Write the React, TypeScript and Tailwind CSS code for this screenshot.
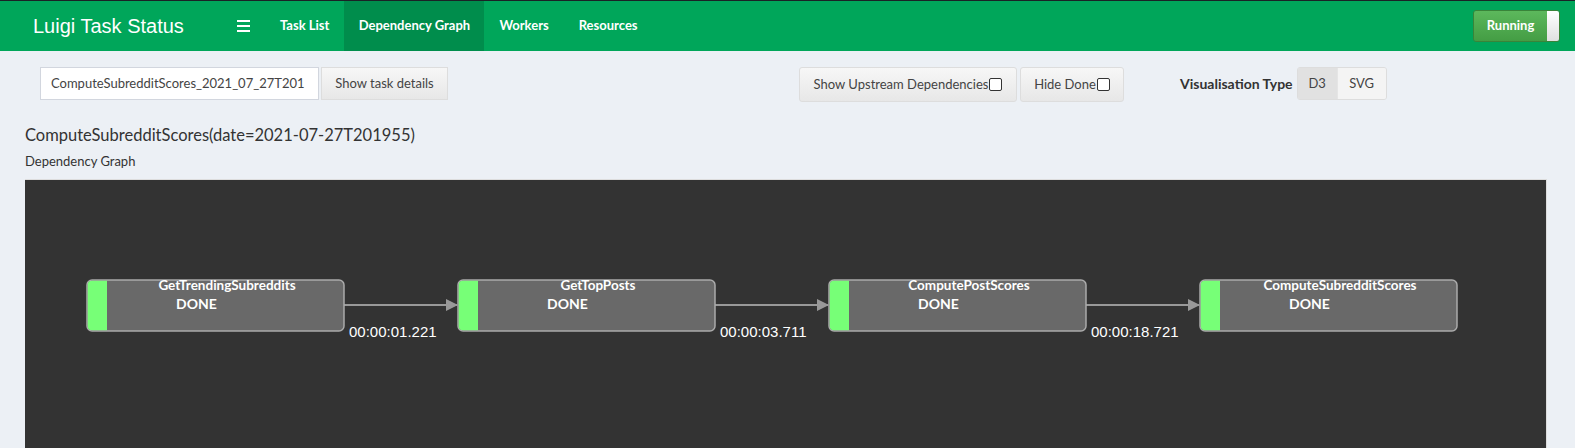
import React from "react";

const nodes = [
  { name: "GetTrendingSubreddits", x: 62 },
  { name: "GetTopPosts", x: 433 },
  { name: "ComputePostScores", x: 804 },
  { name: "ComputeSubredditScores", x: 1175 },
];

const edges = ["00:00:01.221", "00:00:03.711", "00:00:18.721"];

const ui = { fontFamily: "Lato, 'Open Sans', sans-serif" };

function Graph() {
  return (
    <svg width="1521" height="280" className="block">
      <defs>
        <marker id="arrow" markerWidth="12" markerHeight="12" refX="11" refY="6" orient="auto" markerUnits="userSpaceOnUse">
          <path d="M0,0 L12,6 L0,12 z" fill="#999" />
        </marker>
      </defs>
      {edges.map((label, i) => {
        const x1 = nodes[i].x + 257;
        const x2 = nodes[i + 1].x;
        return (
          <g key={label}>
            <line x1={x1} y1={125} x2={x2 - 1} y2={125} stroke="#999" strokeWidth="2" markerEnd="url(#arrow)" />
            <text x={x1 + 5} y={157} fill="#fff" fontSize="15" fontFamily="'Liberation Sans', Arial, sans-serif">
              {label}
            </text>
          </g>
        );
      })}
      {nodes.map((n) => (
        <g key={n.name}>
          <rect x={n.x} y={100} width={257} height={51} rx={5} fill="#696969" stroke="#aaa" strokeWidth="1.5" />
          <path d={`M${n.x + 20},100.75 L${n.x + 5},100.75 Q${n.x + 0.75},100.75 ${n.x + 0.75},105 L${n.x + 0.75},146 Q${n.x + 0.75},150.25 ${n.x + 5},150.25 L${n.x + 20},150.25 z`} fill="#77ff77" />
          <text x={n.x + 140} y={110} textAnchor="middle" fill="#fff" fontSize="13.5" fontWeight="700" style={ui}>
            {n.name}
          </text>
          <text x={n.x + 89} y={129} fill="#fff" fontSize="14" fontWeight="700" style={ui}>
            DONE
          </text>
        </g>
      ))}
    </svg>
  );
}

export default function App() {
  return (
    <div className="h-[448px] overflow-hidden bg-[#ecf0f5] text-[#333]" style={ui}>
      {/* Navbar */}
      <div className="h-[51px] bg-[#00a65a] border-t border-[#1a2226] flex items-center">
        <div className="pl-[33px] w-[232px] text-white text-[20px]" style={{ fontFamily: "'Liberation Sans', Arial, sans-serif" }}>
          Luigi Task Status
        </div>
        <div className="flex flex-col gap-[3px] w-[13px] ml-[5px] mr-[15px]">
          <span className="h-[2px] bg-white" />
          <span className="h-[2px] bg-white" />
          <span className="h-[2px] bg-white" />
        </div>
        <div className="flex h-full text-white text-[13px] font-bold whitespace-nowrap">
          <div className="px-[15px] flex items-center">Task List</div>
          <div className="px-[15px] flex items-center bg-[#008d4c] w-[140px] justify-center">Dependency Graph</div>
          <div className="px-[15px] flex items-center">Workers</div>
          <div className="px-[15px] flex items-center">Resources</div>
        </div>
        <div className="ml-auto mr-[15px] flex h-[32px] rounded-[3px] border border-[#398439] overflow-hidden">
          <div className="w-[73px] flex items-center justify-center text-white text-[13px] font-bold bg-gradient-to-b from-[#5cb85c] to-[#449d44]">
            Running
          </div>
          <div className="w-[12px] bg-gradient-to-b from-white to-[#e0e0e0]" />
        </div>
      </div>

      {/* Controls */}
      <div className="flex items-start pt-[16px] h-[72px]">
        <div className="ml-[40px] w-[279px] h-[33px] bg-white border border-[#d2d6de] flex items-center px-[10px] text-[13px] text-[#444] whitespace-nowrap overflow-hidden">
          ComputeSubredditScores_2021_07_27T201
        </div>
        <div className="ml-[2px] w-[127px] h-[33px] border border-[#ddd] bg-gradient-to-b from-[#f7f7f7] to-[#e7e7e7] flex items-center justify-center text-[13px] text-[#444]">
          Show task details
        </div>
        <div className="ml-[351px] w-[218px] h-[35px] rounded-[3px] border border-[#ddd] bg-gradient-to-b from-[#f7f7f7] to-[#e7e7e7] flex items-center justify-center text-[13px] text-[#444] whitespace-nowrap">
          Show Upstream Dependencies
          <span className="ml-[1px] w-[13px] h-[13px] border border-[#333] rounded-[2px] bg-white" />
        </div>
        <div className="ml-[3px] w-[104px] h-[35px] rounded-[3px] border border-[#ddd] bg-gradient-to-b from-[#f7f7f7] to-[#e7e7e7] flex items-center justify-center text-[13px] text-[#444]">
          Hide Done
          <span className="ml-[1px] w-[13px] h-[13px] border border-[#333] rounded-[2px] bg-white" />
        </div>
        <div className="ml-[56px] mt-[6px] text-[14px] font-bold text-[#333] whitespace-nowrap">Visualisation Type</div>
        <div className="ml-[4px] flex h-[33px] rounded-[3px] border border-[#ddd] overflow-hidden text-[13px] text-[#444]">
          <div className="w-[39px] flex items-center justify-center bg-[#e1e1e1]">D3</div>
          <div className="w-[49px] flex items-center justify-center bg-[#f4f4f4] border-l border-[#e5e5e5]">SVG</div>
        </div>
      </div>

      {/* Title */}
      <div className="pl-[25px] text-[16.5px] leading-[24px] text-[#333]">ComputeSubredditScores(date=2021-07-27T201955)</div>
      <div className="pl-[25px] mt-[6px] text-[13px] leading-[17px] text-[#333]">Dependency Graph</div>

      {/* Graph panel */}
      <div className="ml-[25px] mt-[9px] w-[1522px] h-[280px] bg-[#333] border-t border-r border-[#ddd]">
        <Graph />
      </div>
    </div>
  );
}
